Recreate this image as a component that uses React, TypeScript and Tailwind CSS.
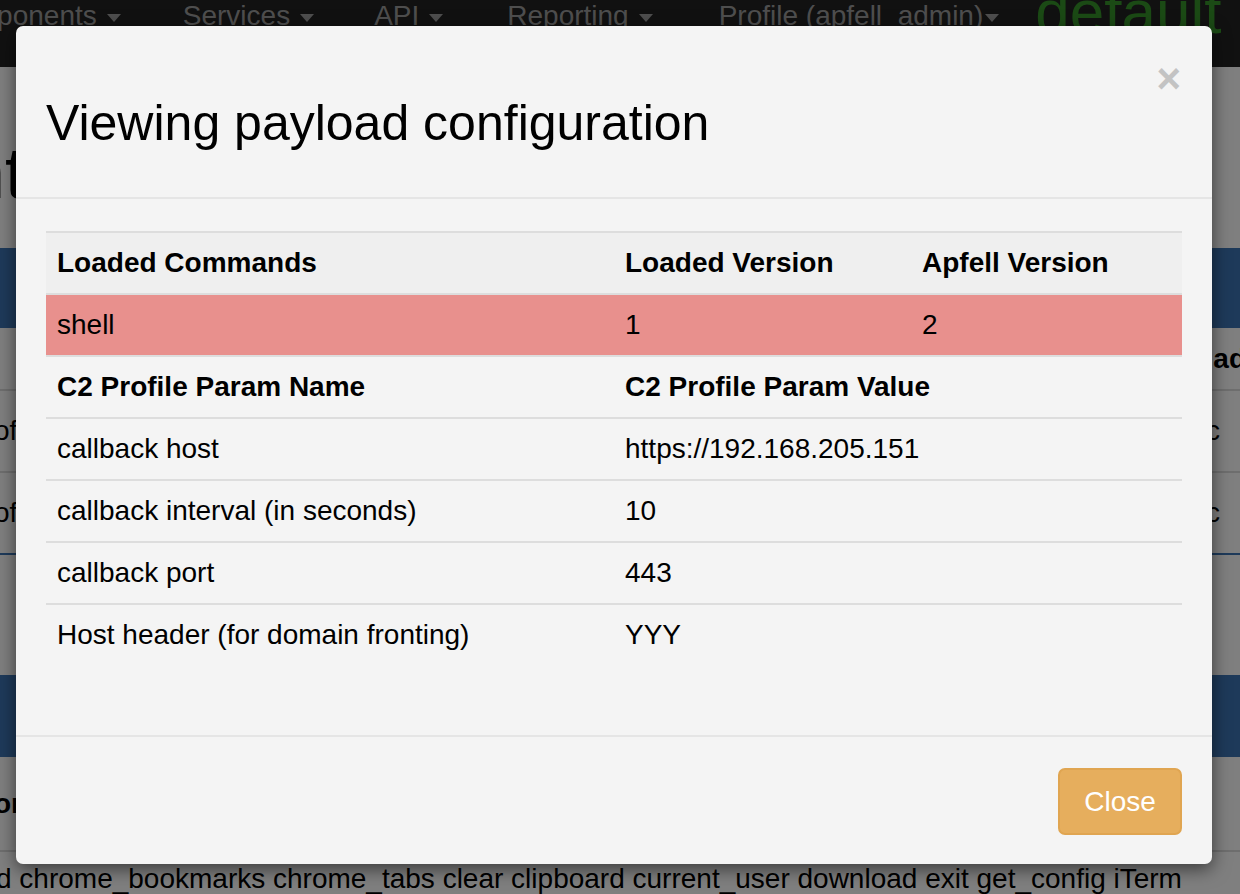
import * as React from "react";

const navItems = [
  { label: "Components", cls: "ml-[-62px]" },
  { label: "Services", cls: "ml-[62px]" },
  { label: "API", cls: "ml-[60px]" },
  { label: "Reporting", cls: "ml-[64px]" },
] as const;

const params = [
  { name: "callback host", value: "https://192.168.205.151" },
  { name: "callback interval (in seconds)", value: "10" },
  { name: "callback port", value: "443" },
  { name: "Host header (for domain fronting)", value: "YYY" },
];

function Caret() {
  return <span className="inline-block ml-[10px] border-x-[7px] border-x-transparent border-t-[8px] border-t-[#9d9d9d] align-middle" />;
}

function BackgroundPage() {
  return (
    <div className="flex flex-col bg-white w-[1240px] h-[894px] overflow-hidden text-black">
      {/* Navbar */}
      <div className="flex flex-shrink-0 items-start bg-[#222222] h-[67px] overflow-hidden whitespace-nowrap">
        {navItems.map((n) => (
          <span key={n.label} className={`mt-[2px] text-[#9d9d9d] text-[28px] leading-[28px] ${n.cls}`}>
            {n.label}
            <Caret />
          </span>
        ))}
        <span className="mt-[2px] ml-[66px] text-[#9d9d9d] text-[28px] leading-[28px]">
          Profile (apfell_admin)
          <span className="inline-block ml-[2px] border-x-[7px] border-x-transparent border-t-[8px] border-t-[#9d9d9d] align-middle" />
        </span>
        <span className="mt-[-19px] ml-[36px] text-[#36952a] text-[62px] leading-[62px]">default</span>
      </div>

      {/* Page */}
      <div className="flex flex-col">
        <h1 className="mt-[66px] ml-[-215px] h-[115px] text-[72px] leading-[80px] whitespace-nowrap">Current Payloads</h1>
        <div className="bg-[#3d74b4] h-[80px]" />
        <div className="flex justify-end items-center border-[#dddddd] border-b-2 h-[63px] font-bold text-[28px]">
          <span className="mr-[-6px]">ad</span>
        </div>
        <div className="flex justify-between items-center border-[#dddddd] border-b-2 h-[82px] text-[28px]">
          <span className="ml-[-6px]">of</span>
          <span className="mr-[20px]">c</span>
        </div>
        <div className="flex justify-between items-center border-[#3d74b4] border-b-2 h-[82px] text-[28px]">
          <span className="ml-[-6px]">of</span>
          <span className="mr-[20px]">c</span>
        </div>
        <div className="h-[120px]" />
        <div className="bg-[#3d74b4] h-[82px]" />
        <div className="flex items-center border-[#dddddd] border-b-2 h-[95px] font-bold text-[28px]">
          <span className="ml-[-6px]">or</span>
        </div>
        <div className="ml-[-4px] pt-[6px] text-[28px] whitespace-nowrap">
          d chrome_bookmarks chrome_tabs clear clipboard current_user download exit get_config iTerm
        </div>
      </div>
    </div>
  );
}

function PayloadModal() {
  return (
    <div className="flex flex-col bg-[#f4f4f4] shadow-[0_5px_18px_rgba(0,0,0,0.55)] mt-[26px] ml-[16px] rounded-[7px] w-[1196px] h-[838px] text-black">
      {/* Header */}
      <div className="relative flex items-center px-[30px] border-[#e5e5e5] border-b-2 h-[173px]">
        <h4 className="mt-[22px] font-normal text-[50px] leading-none">Viewing payload configuration</h4>
        <button className="top-[32px] right-[31px] absolute font-bold text-[#c3c3c3] text-[42px] leading-none">×</button>
      </div>

      {/* Body */}
      <div className="px-[30px] pt-[32px] pb-[70px]">
        <div className="grid grid-cols-[568px_297px_271px] text-[28px]">
          <div className="flex items-center bg-[#efefef] px-[11px] border-[#dddddd] border-t-2 h-[62px] font-bold">Loaded Commands</div>
          <div className="flex items-center bg-[#efefef] px-[11px] border-[#dddddd] border-t-2 h-[62px] font-bold">Loaded Version</div>
          <div className="flex items-center bg-[#efefef] px-[11px] border-[#dddddd] border-t-2 h-[62px] font-bold">Apfell Version</div>

          <div className="flex items-center bg-[#e8908d] px-[11px] border-[#dddddd] border-t-2 h-[62px]">shell</div>
          <div className="flex items-center bg-[#e8908d] px-[11px] border-[#dddddd] border-t-2 h-[62px]">1</div>
          <div className="flex items-center bg-[#e8908d] px-[11px] border-[#dddddd] border-t-2 h-[62px]">2</div>

          <div className="flex items-center px-[11px] border-[#dddddd] border-t-2 h-[62px] font-bold">C2 Profile Param Name</div>
          <div className="flex items-center col-span-2 px-[11px] border-[#dddddd] border-t-2 h-[62px] font-bold">C2 Profile Param Value</div>

          {params.map((p) => (
            <React.Fragment key={p.name}>
              <div className="flex items-center px-[11px] border-[#dddddd] border-t-2 h-[62px]">{p.name}</div>
              <div className="flex items-center col-span-2 px-[11px] border-[#dddddd] border-t-2 h-[62px]">{p.value}</div>
            </React.Fragment>
          ))}
        </div>
      </div>

      {/* Footer */}
      <div className="flex flex-1 justify-end items-center px-[30px] border-[#e5e5e5] border-t-2">
        <button className="bg-[#e6ae5d] mt-[2px] border-[#e0a551] border-2 rounded-[7px] w-[124px] h-[67px] text-[28px] text-white">Close</button>
      </div>
    </div>
  );
}

export default function App() {
  return (
    <div className="relative w-[1240px] h-[894px] overflow-hidden font-['Liberation_Sans',Arial,sans-serif]">
      <BackgroundPage />
      <div className="absolute inset-0 bg-black/50">
        <PayloadModal />
      </div>
    </div>
  );
}
